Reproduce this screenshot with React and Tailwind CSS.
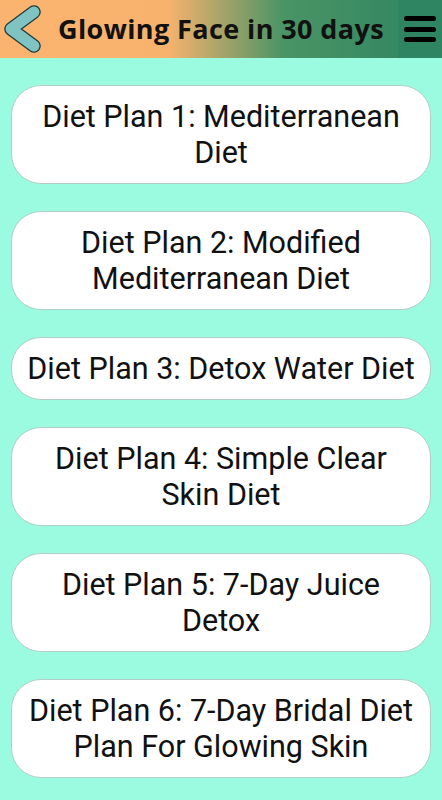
import React from "react";

const plans = [
  "Diet Plan 1: Mediterranean Diet",
  "Diet Plan 2: Modified Mediterranean Diet",
  "Diet Plan 3: Detox Water Diet",
  "Diet Plan 4: Simple Clear Skin Diet",
  "Diet Plan 5: 7-Day Juice Detox",
  "Diet Plan 6: 7-Day Bridal Diet Plan For Glowing Skin",
];

export default function App() {
  return (
    <div className="min-h-screen w-[442px] bg-[#9bfbe0]" style={{ fontFamily: "Roboto, sans-serif" }}>
      <div className="flex h-[58px] items-center bg-[linear-gradient(90deg,#fab46f_0%,#f8b26d_38%,#4a9466_64%,#2e8460_100%)]">
        <button className="flex h-full w-[46px] shrink-0 items-center justify-start pl-[2px]">
          <svg width="42" height="58" viewBox="0 0 42 58">
            <polyline points="32,12 9,29 32,46" fill="none" stroke="#1d3b3b" strokeWidth="13.5" strokeLinejoin="round" strokeLinecap="round" />
            <polyline points="32,12 9,29 32,46" fill="none" stroke="#7fc4c3" strokeWidth="11" strokeLinejoin="round" strokeLinecap="round" />
          </svg>
        </button>
        <h1
          className="ml-[12px] flex-1 whitespace-nowrap text-[27px] font-bold tracking-[0.4px] text-[#111]"
          style={{ fontFamily: "'Open Sans', sans-serif" }}
        >
          Glowing Face in 30 days
        </h1>
        <button className="flex h-full w-[45px] shrink-0 flex-col items-center justify-center gap-[5.5px] border-l border-[#3a8c66] bg-[#2f8562]">
          <span className="h-[5px] w-[32px] rounded-full bg-black" />
          <span className="h-[5px] w-[32px] rounded-full bg-black" />
          <span className="h-[5px] w-[32px] rounded-full bg-black" />
        </button>
      </div>
      <div className="flex flex-col gap-[27px] px-[11px] pt-[27px] pb-[20px]">
        {plans.map((p) => (
          <button
            key={p}
            className="rounded-[30px] border border-[#b3cdc6] bg-white px-[12px] py-[12.5px] text-center text-[30.5px] leading-[36px] text-[#111]"
          >
            {p}
          </button>
        ))}
      </div>
    </div>
  );
}
